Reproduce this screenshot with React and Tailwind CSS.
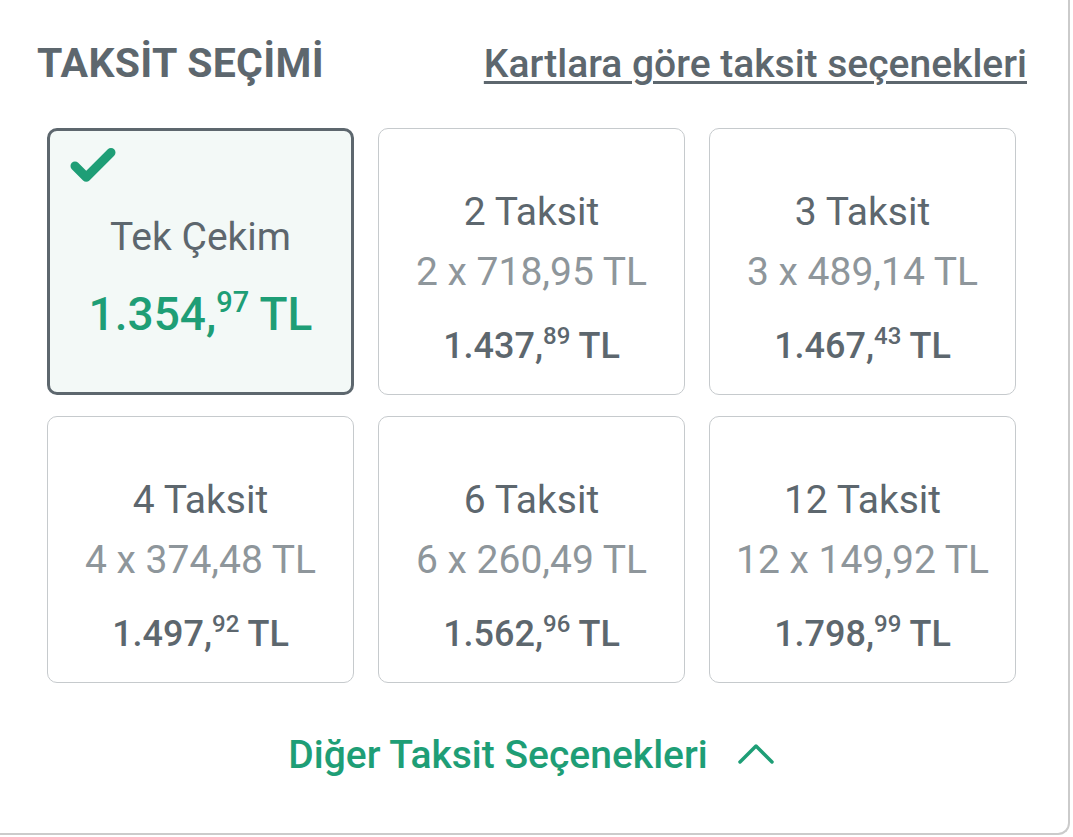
import { Check, ChevronUp } from "lucide-react";

const options = [
  { title: "2 Taksit", each: "2 x 718,95 TL", whole: "1.437", cents: "89" },
  { title: "3 Taksit", each: "3 x 489,14 TL", whole: "1.467", cents: "43" },
  { title: "4 Taksit", each: "4 x 374,48 TL", whole: "1.497", cents: "92" },
  { title: "6 Taksit", each: "6 x 260,49 TL", whole: "1.562", cents: "96" },
  { title: "12 Taksit", each: "12 x 149,92 TL", whole: "1.798", cents: "99" },
];

function Price({ whole, cents, className, supClass }) {
  return (
    <p className={className}>
      {whole},<sup className={supClass}>{cents}</sup> TL
    </p>
  );
}

function OptionCard({ option }) {
  return (
    <div className="h-[267px] rounded-[10px] border border-[#c6cacd] bg-white flex flex-col items-center justify-center pt-[34px]">
      <p className="text-[39px] leading-[44px] text-[#5d676e]">{option.title}</p>
      <p className="mt-[16px] text-[39px] leading-[44px] text-[#8e969b]">{option.each}</p>
      <Price
        whole={option.whole}
        cents={option.cents}
        className="mt-[32px] text-[36px] leading-[40px] font-medium text-[#5d676e]"
        supClass="text-[24px] top-[-0.6em] relative align-baseline"
      />
    </div>
  );
}

export default function App() {
  return (
    <div className="w-[1073px] h-[837px] bg-white font-['Roboto',sans-serif]">
      <div className="w-[1070px] h-[835px] border-r-2 border-b-2 border-[#cbcbcb] rounded-br-[12px]">
        {/* Header */}
        <div className="flex items-baseline justify-between pl-[37px] pr-[41px] pt-[33px]">
          <h2 className="text-[41px] font-bold text-[#5d676e] tracking-[0.3px]">TAKSİT SEÇİMİ</h2>
          <a className="text-[39px] font-medium text-[#5d676e] underline underline-offset-[4px] decoration-[3px]">
            Kartlara göre taksit seçenekleri
          </a>
        </div>

        {/* Options */}
        <div className="grid grid-cols-3 gap-x-[24px] gap-y-[21px] pl-[47px] pr-[52px] mt-[33px]">
          <div className="relative h-[267px] rounded-[10px] border-[3px] border-[#5d676e] bg-[#f3f9f7] flex flex-col items-center justify-center pt-[32px]">
            <Check className="absolute left-[16px] top-[8px] text-[#1e9e76]" size={54} strokeWidth={4} />
            <p className="text-[39px] leading-[44px] text-[#5d676e]">Tek Çekim</p>
            <Price
              whole="1.354"
              cents="97"
              className="mt-[30px] text-[46px] leading-[50px] font-medium text-[#1e9e76]"
              supClass="text-[29px] top-[-0.62em] relative align-baseline"
            />
          </div>
          {options.map((o) => (
            <OptionCard key={o.title} option={o} />
          ))}
        </div>

        {/* Footer */}
        <div className="flex items-center justify-center gap-[16px] mt-[43px] pl-[8px]">
          <span className="text-[39px] font-medium text-[#1e9e76]">Diğer Taksit Seçenekleri</span>
          <ChevronUp className="text-[#1e9e76] -mt-[4px]" size={64} strokeWidth={1.3} />
        </div>
      </div>
    </div>
  );
}
